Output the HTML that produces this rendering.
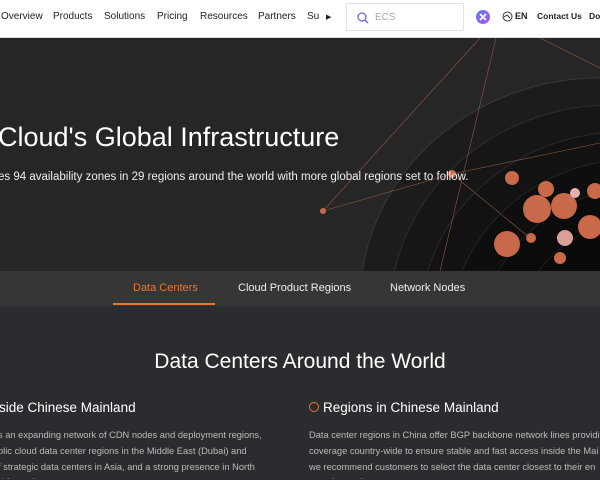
<!DOCTYPE html>
<html><head><meta charset="utf-8"><style>
*{margin:0;padding:0;box-sizing:border-box}
html,body{width:600px;height:480px;overflow:hidden}
body{background:#2b2c2f;font-family:"Liberation Sans",sans-serif;position:relative}
.nav{position:absolute;top:0;left:0;width:600px;height:38px;background:#fff;border-bottom:1px solid #ddd;overflow:hidden}
.nav span{position:absolute;top:11px;font-size:10px;color:#222;white-space:nowrap}
.search{position:absolute;left:346px;top:3px;width:118px;height:28px;border:1px solid #e3e3e3;background:#fff}
.hero{position:absolute;top:38px;left:0;width:600px;height:233px;background:#262626;overflow:hidden}
h1{position:absolute;left:-2px;top:84px;font-size:27px;font-weight:normal;color:#fff;white-space:nowrap}
.sub{position:absolute;left:-2px;top:133px;font-size:11.5px;color:#eee;white-space:nowrap}
.tabs{position:absolute;top:271px;left:0;width:600px;height:35px;background:#363636;overflow:hidden}
.tabs span{position:absolute;top:11px;font-size:11px;color:#eee;white-space:nowrap}
.ul{position:absolute;left:113px;top:303px;width:102px;height:2px;background:#e8772e}
h2{position:absolute;left:0;width:600px;text-align:center;top:350px;font-size:21px;font-weight:normal;color:#fff}
h3{position:absolute;top:400px;font-size:13.5px;font-weight:normal;color:#fff;white-space:nowrap}
.pw{position:absolute;top:428px;height:51px;overflow:hidden}
p{font-size:9.3px;line-height:15.8px;color:#bbb;white-space:nowrap}
</style></head><body>
<div class="nav">
<span style="left:1px">Overview</span><span style="left:53px">Products</span><span style="left:104px">Solutions</span><span style="left:157px">Pricing</span><span style="left:200px">Resources</span><span style="left:258px">Partners</span><span style="left:307px">Su</span><span style="left:326px;font-size:7px;top:13px">▶</span>
<div class="search"><svg width="14" height="14" style="position:absolute;left:9px;top:7px"><circle cx="6" cy="6" r="4" fill="none" stroke="#6a6ad0" stroke-width="1.3"/><line x1="9" y1="9" x2="12" y2="12" stroke="#6a6ad0" stroke-width="1.3"/></svg><span style="position:absolute;left:28px;top:8px;font-size:10px;color:#aaa">ECS</span></div>
<svg width="14" height="14" style="position:absolute;left:476px;top:10px"><defs><linearGradient id="g" x1="0" y1="0" x2="1" y2="1"><stop offset="0" stop-color="#5b7cf5"/><stop offset="1" stop-color="#b455e0"/></linearGradient></defs><circle cx="7" cy="7" r="7" fill="url(#g)"/><path d="M4 4L10 10M10 4L4 10" stroke="#fff" stroke-width="1.6"/></svg>
<svg width="11" height="11" style="position:absolute;left:502px;top:11px"><circle cx="5.5" cy="5.5" r="4.5" fill="none" stroke="#333" stroke-width="1"/><path d="M2 6L5 4L8 7" fill="none" stroke="#333"/></svg>
<span style="left:515px;font-size:9px;font-weight:bold">EN</span><span style="left:537px;font-size:8.5px;font-weight:bold">Contact Us</span><span style="left:589px;font-size:8.5px;font-weight:bold;width:11px;overflow:hidden">Do</span>
</div>
<div class="hero">
<svg width="600" height="233" style="position:absolute;left:0;top:0">
<g fill="none">
<ellipse cx="600" cy="265" rx="240" ry="225" fill="#1c1c1c" stroke="#383838"/>
<ellipse cx="612" cy="275" rx="222" ry="208" fill="#161616" stroke="#2e2e2e"/>
<ellipse cx="624" cy="285" rx="204" ry="191" fill="#121212" stroke="#2a2a2a"/>
<ellipse cx="636" cy="295" rx="186" ry="174" fill="#0e0e0e" stroke="#252525"/>
<ellipse cx="648" cy="305" rx="168" ry="157" fill="#0b0b0b" stroke="#212121"/>
<ellipse cx="660" cy="315" rx="150" ry="140" fill="#090909" stroke="#1d1d1d"/>
</g>
<g stroke="#8a5a45" stroke-width="0.6" fill="none">
<line x1="323" y1="173" x2="452" y2="136"/><line x1="452" y1="136" x2="600" y2="105"/>
<line x1="323" y1="173" x2="480" y2="0"/><line x1="496" y1="0" x2="440" y2="233"/>
<line x1="452" y1="136" x2="530" y2="200"/><line x1="540" y1="0" x2="600" y2="30"/>
</g>
<g fill="#c8694a"><circle cx="323" cy="173" r="3"/><circle cx="452" cy="136" r="4"/>
<circle cx="512" cy="140" r="7"/><circle cx="546" cy="151" r="8"/><circle cx="537" cy="171" r="14"/><circle cx="564" cy="168" r="13"/><circle cx="595" cy="153" r="8"/><circle cx="590" cy="189" r="12"/><circle cx="507" cy="206" r="13"/><circle cx="531" cy="200" r="5"/><circle cx="565" cy="200" r="8" fill="#d9a09a"/><circle cx="575" cy="155" r="5" fill="#e7b0b0"/><circle cx="560" cy="220" r="6"/></g>
</svg>
<h1>Cloud's Global Infrastructure</h1>
<div class="sub">es 94 availability zones in 29 regions around the world with more global regions set to follow.</div>
</div>
<div class="tabs"><span style="left:133px;color:#e8772e">Data Centers</span><span style="left:238px">Cloud Product Regions</span><span style="left:390px">Network Nodes</span></div>
<div class="ul"></div>
<h2>Data Centers Around the World</h2>
<h3 style="left:-1px">side Chinese Mainland</h3>
<h3 style="left:309px"><span style="display:inline-block;width:10px;height:10px;border:1.5px solid #e8772e;border-radius:50%;margin-right:4px"></span>Regions in Chinese Mainland</h3>
<div class="pw" style="left:-2px;width:300px"><p>s an expanding network of CDN nodes and deployment regions,<br>blic cloud data center regions in the Middle East (Dubai) and<br>f strategic data centers in Asia, and a strong presence in North<br>d Australia.</p></div>
<div class="pw" style="left:309px;width:291px"><p>Data center regions in China offer BGP backbone network lines providi<br>coverage country-wide to ensure stable and fast access inside the Mai<br>we recommend customers to select the data center closest to their en<br>speed up online access.</p></div>
</body></html>
